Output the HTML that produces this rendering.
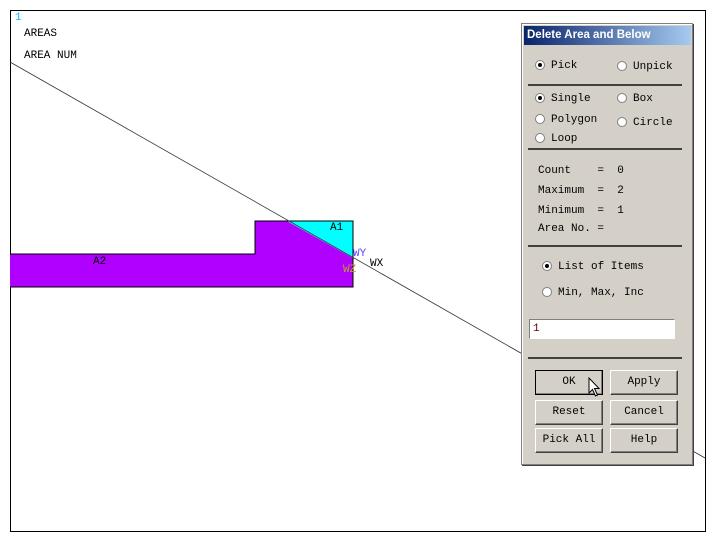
<!DOCTYPE html>
<html><head><style>
body{margin:0;width:720px;height:546px;background:#fff;position:relative;overflow:hidden;font-family:"Liberation Mono",monospace;font-size:11px}
.a{position:absolute;white-space:pre;padding-top:2px}
#dlg{position:absolute;left:521px;top:23px;width:170px;height:440px;background:#d4d0c8;border:1px solid #808080;box-shadow:inset 1px 1px #fff,1px 1px #404040}
#tt{position:absolute;left:2px;top:2px;width:167px;height:19px;background:linear-gradient(90deg,#0a246a,#a6caf0);color:#fff;font:bold 11.5px "Liberation Sans",sans-serif;line-height:19px;padding-left:3px;box-sizing:border-box}
.r{position:absolute;width:10px;height:10px;border-radius:50%;background:#fff;border:1px solid #808080;box-sizing:border-box}
.r.on::after{content:"";position:absolute;left:2px;top:2px;width:4px;height:4px;border-radius:50%;background:#000}
.hr{position:absolute;left:6px;width:154px;height:2px;background:#404040}
.b{position:absolute;width:68px;height:25px;border:1px solid;border-color:#fff #404040 #404040 #fff;box-sizing:border-box;text-align:center;line-height:23px;box-shadow:inset -1px -1px #808080}
</style></head><body>
<svg width="720" height="546" style="position:absolute;left:0;top:0">
<rect x="10.5" y="10.5" width="695" height="521" fill="none" stroke="#000"/>
<polygon points="10,254 255,254 255,221 287,221 353,258 353,287 10,287" fill="#b000ff"/>
<polygon points="287,221 353,221 353,258" fill="#00ffff"/>
<polyline points="10,254 255,254 255,221 353,221 353,287 10,287" fill="none" stroke="#000"/>
<line x1="10" y1="62" x2="705" y2="458" stroke="#333" stroke-width="0.8"/>
</svg>
<div class="a" style="left:15px;top:10px;color:#00c0ff">1</div>
<div class="a" style="left:24px;top:26px">AREAS</div>
<div class="a" style="left:24px;top:48px">AREA NUM</div>
<div class="a" style="left:330px;top:220px">A1</div>
<div class="a" style="left:93px;top:254px">A2</div>
<div class="a" style="left:353px;top:246px;color:#6040ff">WY</div>
<div class="a" style="left:370px;top:256px">WX</div>
<div class="a" style="left:343px;top:262px;color:#c0a020">WZ</div>
<div id="dlg">
<div id="tt">Delete Area and Below</div>
<div class="r on" style="left:13px;top:36px"></div><div class="a" style="left:29px;top:34px">Pick</div>
<div class="r" style="left:95px;top:37px"></div><div class="a" style="left:111px;top:35px">Unpick</div>
<div class="hr" style="top:60px"></div>
<div class="r on" style="left:13px;top:69px"></div><div class="a" style="left:29px;top:67px">Single</div>
<div class="r" style="left:95px;top:69px"></div><div class="a" style="left:111px;top:67px">Box</div>
<div class="r" style="left:13px;top:90px"></div><div class="a" style="left:29px;top:88px">Polygon</div>
<div class="r" style="left:95px;top:93px"></div><div class="a" style="left:111px;top:91px">Circle</div>
<div class="r" style="left:13px;top:109px"></div><div class="a" style="left:29px;top:107px">Loop</div>
<div class="hr" style="top:124px"></div>
<div class="a" style="left:16px;top:139px">Count    =  0</div>
<div class="a" style="left:16px;top:159px">Maximum  =  2</div>
<div class="a" style="left:16px;top:179px">Minimum  =  1</div>
<div class="a" style="left:16px;top:197px">Area No. =</div>
<div class="hr" style="top:221px"></div>
<div class="r on" style="left:20px;top:237px"></div><div class="a" style="left:36px;top:235px">List of Items</div>
<div class="r" style="left:20px;top:263px"></div><div class="a" style="left:36px;top:261px">Min, Max, Inc</div>
<div style="position:absolute;left:7px;top:295px;width:146px;height:20px;background:#fff;border:1px solid;border-color:#808080 #fff #fff #808080;box-sizing:border-box"><span class="a" style="left:3px;top:1px;color:#600">1</span></div>
<div class="hr" style="top:333px"></div>
<div class="b" style="left:13px;top:346px;border:1px solid #000;">OK</div>
<div class="b" style="left:88px;top:346px">Apply</div>
<div class="b" style="left:13px;top:376px">Reset</div>
<div class="b" style="left:88px;top:376px">Cancel</div>
<div class="b" style="left:13px;top:404px">Pick All</div>
<div class="b" style="left:88px;top:404px">Help</div>
<svg style="position:absolute;left:66px;top:353px" width="14" height="22"><path d="M1 1 L1 16 L4.5 12.5 L7.5 19 L9.5 18 L6.5 11.5 L11 11.5 Z" fill="#fff" stroke="#000"/></svg>
</div>
</body></html>
